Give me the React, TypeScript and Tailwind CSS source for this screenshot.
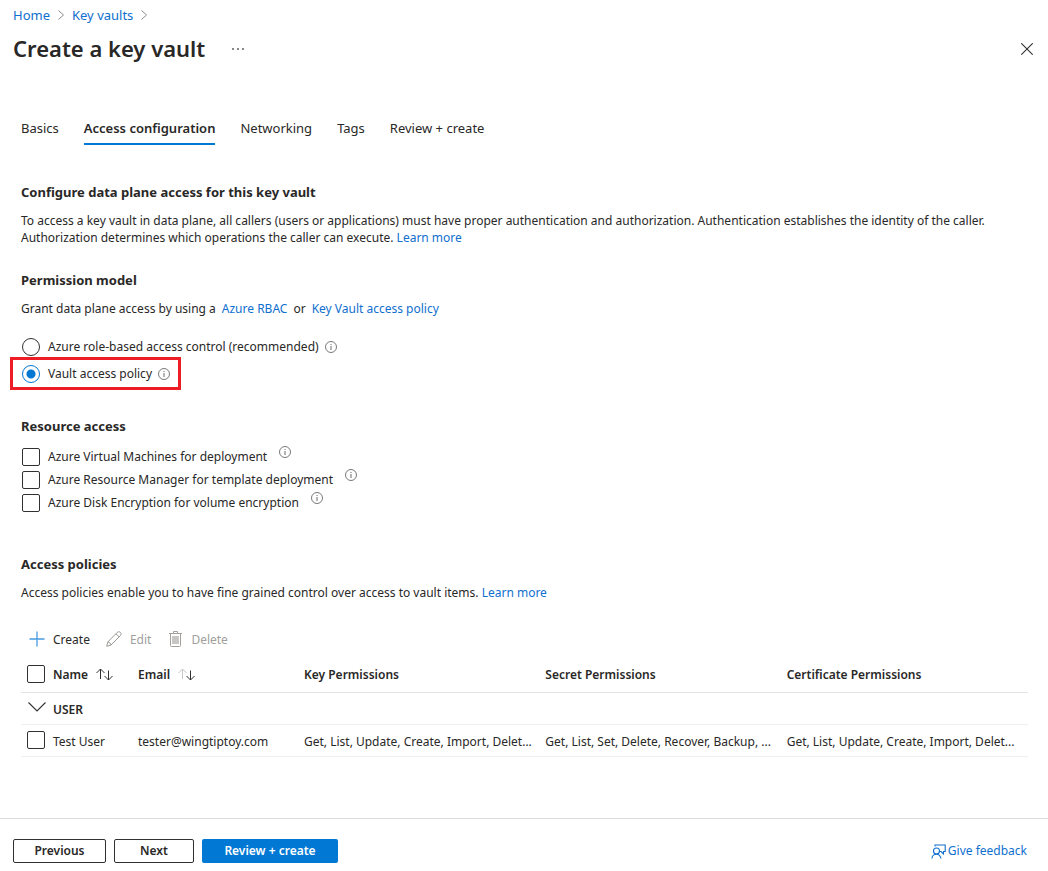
import { useState } from "react";
import type { ReactNode } from "react";

const sans = "font-['Noto_Sans','Open_Sans',sans-serif]";

function InfoIcon({ className = "" }: { className?: string }) {
  return (
    <svg viewBox="0 0 12 12" className={`size-3 shrink-0 ${className}`} fill="none" stroke="#6a6a6a" aria-hidden="true">
      <circle cx="6" cy="6" r="5.5" strokeWidth="0.9" />
      <path d="M6 5v4M6 3v1" strokeWidth="1" />
    </svg>
  );
}

function Crumb({ children }: { children: ReactNode }) {
  return (
    <li className="flex items-center gap-2">
      <a href="#" className="text-[#0f6fce]">
        {children}
      </a>
      <svg viewBox="0 0 6 10" className="h-2.5 w-1.5" fill="none" stroke="#8a8a8a" aria-hidden="true">
        <path d="M0.5 0.5L5.5 5L0.5 9.5" />
      </svg>
    </li>
  );
}

function Link({ children }: { children: ReactNode }) {
  return (
    <a href="#" className="text-[#0f6fce]">
      {children}
    </a>
  );
}

function Heading({ children }: { children: ReactNode }) {
  return <h2 className="text-[13px] leading-5 font-bold">{children}</h2>;
}

function Radio({ id, label, checked, onChange, highlighted = false }: { id: string; label: string; checked: boolean; onChange: () => void; highlighted?: boolean }) {
  return (
    <div className="relative flex h-[27px] w-fit items-center">
      {highlighted && <div className="pointer-events-none absolute -inset-y-[3px] -right-[11px] -left-[11px] border-3 border-[#ee1c25]" />}
      <input
        id={id}
        type="radio"
        name="permission-model"
        checked={checked}
        onChange={onChange}
        className="ml-px size-[18px] shrink-0 appearance-none rounded-full border border-[#323130] bg-white checked:border-[#0078d4] checked:bg-[radial-gradient(circle,#0078d4_4px,transparent_5px)]"
      />
      <label htmlFor={id} className="ml-2">
        {label}
      </label>
      <InfoIcon className="ml-1.5" />
    </div>
  );
}

const box =
  "block size-[18px] shrink-0 appearance-none rounded-[2px] border border-[#323130] bg-white checked:border-[#0078d4] checked:bg-[#0078d4]";

function Check({ id, label }: { id: string; label: string }) {
  return (
    <div className="flex h-[23px] items-center">
      <input id={id} type="checkbox" className={`ml-px ${box}`} />
      <label htmlFor={id} className="ml-2">
        {label}
      </label>
      <InfoIcon className="mb-2.5 ml-3" />
    </div>
  );
}

function SortIcon({ upClass }: { upClass: string }) {
  return (
    <svg viewBox="0 0 17 13" className="h-[13px] w-[17px]" fill="none" stroke="#323130" aria-hidden="true">
      <path d="M4.5 11V1M0.5 5L4.5 1L8.5 5" className={upClass} />
      <path d="M12.5 2.5V12M8.5 8L12.5 12L16.5 8" />
    </svg>
  );
}

const tabs = ["Basics", "Access configuration", "Networking", "Tags", "Review + create"];

export default function App() {
  const [tab, setTab] = useState("Access configuration");
  const [model, setModel] = useState("vault");

  return (
    <div className={`flex min-h-screen flex-col bg-white text-xs leading-[17px] text-[#292827] ${sans}`}>
      <header className="px-[13px] pt-[5px]">
        <nav aria-label="Breadcrumb">
          <ol className="flex gap-2 text-[13px] leading-5">
            <Crumb>Home</Crumb>
            <Crumb>Key vaults</Crumb>
          </ol>
        </nav>
        <div className="mt-2 flex h-8 items-center">
          <h1 className="pb-0.5 text-[22px] leading-8 font-semibold">Create a key vault</h1>
          <button type="button" aria-label="More actions" className="ml-[27px]">
            <svg viewBox="0 0 12 2" className="h-0.5 w-3" fill="#8a8886" aria-hidden="true">
              <path d="M0 0h2v2H0zM5 0h2v2H5zM10 0h2v2h-2z" />
            </svg>
          </button>
          <button type="button" aria-label="Close" className="mr-0.5 ml-auto">
            <svg viewBox="0 0 12 12" className="size-3" fill="none" stroke="#323130" strokeWidth="1.1" aria-hidden="true">
              <path d="M0.3 0.3L11.7 11.7M11.7 0.3L0.3 11.7" />
            </svg>
          </button>
        </div>
      </header>

      <main className="pt-[49px] pr-5 pl-[21px]">
        <div role="tablist" className="flex gap-[25px] text-[13px]">
          {tabs.map((name) => (
            <button
              key={name}
              type="button"
              role="tab"
              aria-selected={tab === name}
              onClick={() => setTab(name)}
              className={`border-b-2 pt-1 pb-[5px] leading-5 ${tab === name ? "border-[#0078d4] font-semibold" : "border-transparent"}`}
            >
              {name}
            </button>
          ))}
        </div>

        <section className="mt-[37px]">
          <Heading>Configure data plane access for this key vault</Heading>
          <p className="mt-2.5">
            To access a key vault in data plane, all callers (users or applications) must have proper authentication and authorization. Authentication
            establishes the identity of the caller.
            <br />
            Authorization determines which operations the caller can execute. <Link>Learn more</Link>
          </p>
        </section>

        <section className="mt-6">
          <Heading>Permission model</Heading>
          <p className="mt-2.5 flex gap-1.5">
            <span>Grant data plane access by using a</span>
            <Link>Azure RBAC</Link>
            <span>or</span>
            <Link>Key Vault access policy</Link>
          </p>
          <div className="mt-4">
            <Radio id="rbac" label="Azure role-based access control (recommended)" checked={model === "rbac"} onChange={() => setModel("rbac")} />
            <Radio id="vault" label="Vault access policy" checked={model === "vault"} onChange={() => setModel("vault")} highlighted />
          </div>
        </section>

        <section className="mt-[29px]">
          <Heading>Resource access</Heading>
          <div className="mt-[9px]">
            <Check id="vm" label="Azure Virtual Machines for deployment" />
            <Check id="arm" label="Azure Resource Manager for template deployment" />
            <Check id="disk" label="Azure Disk Encryption for volume encryption" />
          </div>
        </section>

        <section className="mt-10">
          <Heading>Access policies</Heading>
          <p className="mt-2.5">
            Access policies enable you to have fine grained control over access to vault items. <Link>Learn more</Link>
          </p>

          <div className="mt-7 flex h-5 items-center gap-4 pl-2">
            <button type="button" className="flex items-center gap-2">
              <svg viewBox="0 0 16 16" className="size-4" fill="none" stroke="#4a9be0" strokeWidth="1.3" aria-hidden="true">
                <path d="M8 0.5V15.5M0.5 8H15.5" />
              </svg>
              Create
            </button>
            <button type="button" disabled className="flex items-center gap-2 text-[#a19f9d]">
              <svg viewBox="0 0 16 16" className="size-4" fill="none" stroke="#9a9896" aria-hidden="true">
                <path d="M0.7 15.3L1.9 10.8L11.4 1.3C12.2 0.5 13.4 0.5 14.3 1.4C15.3 2.4 15.3 3.6 14.6 4.4L5 14L0.7 15.3ZM10 2.8L13.1 5.9M1.9 10.8C3.4 11.2 4.6 12.4 5 14" />
              </svg>
              Edit
            </button>
            <button type="button" disabled className="flex items-center gap-2 text-[#a19f9d]">
              <svg viewBox="0 0 16 16" className="size-4" fill="none" stroke="#a3a19f" aria-hidden="true">
                <path d="M5 5h7v8H5z" fill="#c8c6c4" stroke="none" />
                <path d="M2 2.5h13M6.5 2.5v-2h4v2M3.5 2.5v12q0 1 1 1h8q1 0 1-1v-12" />
              </svg>
              Delete
            </button>
          </div>

          <table className="mt-[7px] w-full table-fixed border-collapse text-left">
            <colgroup>
              <col className="w-8" />
              <col className="w-[85px]" />
              <col className="w-[166px]" />
              <col />
              <col />
              <col />
            </colgroup>
            <thead>
              <tr className="h-9 border-b border-[#e5e4e3]">
                <th className="p-0 pl-1.5">
                  <input type="checkbox" aria-label="Select all" className={box} />
                </th>
                <th className="p-0 pt-0.5 font-semibold">
                  <button type="button" className="flex items-center gap-2">
                    Name
                    <SortIcon upClass="" />
                  </button>
                </th>
                <th className="p-0 pt-0.5 font-semibold">
                  <button type="button" className="flex items-center gap-2">
                    Email
                    <SortIcon upClass="stroke-[#c8c6c4]" />
                  </button>
                </th>
                <th className="p-0 pt-0.5 font-semibold">Key Permissions</th>
                <th className="p-0 pt-0.5 font-semibold">Secret Permissions</th>
                <th className="p-0 pt-0.5 font-semibold">Certificate Permissions</th>
              </tr>
            </thead>
            <tbody>
              <tr className="h-8 border-b border-[#f0efee]">
                <td className="p-0 pl-[7px]">
                  <button type="button" aria-label="Collapse group" className="block">
                    <svg viewBox="0 0 18 10" className="mb-0.5 h-2.5 w-[18px]" fill="none" stroke="#323130" strokeWidth="1.1" aria-hidden="true">
                      <path d="M0.5 0.5L9 9L17.5 0.5" />
                    </svg>
                  </button>
                </td>
                <th colSpan={5} className="p-0 pt-0.5 font-semibold">
                  USER
                </th>
              </tr>
              <tr className="h-8 border-b border-[#f0efee]">
                <td className="p-0 pl-1.5">
                  <input type="checkbox" aria-label="Select Test User" className={box} />
                </td>
                <td className="p-0 pt-0.5">Test User</td>
                <td className="p-0 pt-0.5">tester@wingtiptoy.com</td>
                <td className="p-0 pt-0.5 whitespace-nowrap">Get, List, Update, Create, Import, Delet...</td>
                <td className="p-0 pt-0.5 whitespace-nowrap">Get, List, Set, Delete, Recover, Backup, ...</td>
                <td className="p-0 pt-0.5 whitespace-nowrap">Get, List, Update, Create, Import, Delet...</td>
              </tr>
            </tbody>
          </table>
        </section>
      </main>

      <footer className="mt-auto flex items-center border-t border-[#dcdbda] px-[13px] pt-5 pb-2">
        <div className="flex gap-2 font-semibold">
          <button type="button" className="h-6 w-[93px] rounded-[2px] border border-[#323130] pb-0.5">
            Previous
          </button>
          <button type="button" className="h-6 w-20 rounded-[2px] border border-[#323130] pb-0.5">
            Next
          </button>
          <button type="button" className="h-6 w-34 rounded-[2px] bg-[#0078d4] pb-0.5 text-white">
            Review + create
          </button>
        </div>
        <a href="#" className="mr-2 ml-auto flex items-center gap-0.5 text-[#0f6fce]">
          <svg viewBox="0 0 15 15" className="size-[15px]" fill="none" stroke="#0f6fce" strokeWidth="1.1" aria-hidden="true">
            <circle cx="5.5" cy="7" r="3" />
            <path d="M1 14.5C1 12 3 10.2 5.5 10.2S9.5 12 10 14.5M4 2.5V1H14.2V7.5H12.5V10L10 7.5H9" />
          </svg>
          <span className="pb-0.5">Give feedback</span>
        </a>
      </footer>
    </div>
  );
}
